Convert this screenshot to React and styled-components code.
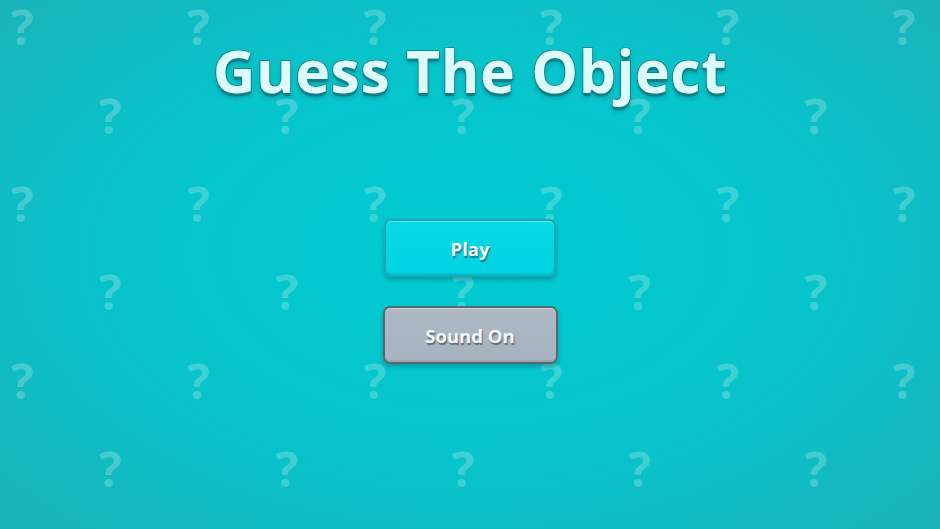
import React from "react";
import styled, { createGlobalStyle } from "styled-components";

const GlobalStyle = createGlobalStyle`
  html, body {
    margin: 0;
    padding: 0;
    width: 100%;
    height: 100%;
    overflow: hidden;
  }
  body {
    font-family: "Open Sans", "Noto Sans", sans-serif;
  }
`;

const COLS = 11;
const ROWS = 7;

export default function App() {
  const cells = [];
  for (let r = 0; r < ROWS; r++) {
    for (let c = 0; c < COLS; c++) {
      cells.push(<Mark key={r + "-" + c}>{(r + c) % 2 === 0 ? "?" : ""}</Mark>);
    }
  }

  return (
    <>
      <GlobalStyle />
      <Screen>
        <Pattern>{cells}</Pattern>
        <Content>
          <Title>Guess The Object</Title>
          <Menu>
            <MenuButton variant="play">Play</MenuButton>
            <MenuButton variant="sound">Sound On</MenuButton>
          </Menu>
        </Content>
      </Screen>
    </>
  );
}

const Screen = styled.div`
  position: relative;
  width: 940px;
  height: 529px;
  overflow: hidden;
  background: radial-gradient(
    ellipse 70% 75% at 50% 48%,
    #00cbd2 0%,
    #08c3ca 55%,
    #1ab2b8 100%
  );
`;

const Pattern = styled.div`
  position: absolute;
  left: -22px;
  top: -17px;
  display: grid;
  grid-template-columns: repeat(${COLS}, 88.2px);
  grid-auto-rows: 88.4px;
  pointer-events: none;
`;

const Mark = styled.span`
  display: flex;
  align-items: center;
  justify-content: center;
  font-family: "Open Sans", sans-serif;
  font-weight: 700;
  font-size: 48px;
  line-height: 1;
  color: rgba(255, 255, 255, 0.22);
`;

const Content = styled.div`
  position: relative;
  display: flex;
  flex-direction: column;
  align-items: center;
  padding-top: 31px;
`;

const Title = styled.h1`
  margin: 0;
  font-family: "Open Sans", sans-serif;
  font-weight: 700;
  font-size: 59px;
  line-height: 78px;
  letter-spacing: 0.5px;
  color: #dcfcfc;
  -webkit-text-stroke: 1.6px #167e86;
  paint-order: stroke fill;
  text-shadow: 0 3px 0 #127f87, 0 4px 4px rgba(0, 70, 80, 0.35);
`;

const Menu = styled.div`
  display: flex;
  flex-direction: column;
  align-items: center;
  gap: 29px;
  margin-top: 110px;
`;

const MenuButton = styled.button`
  width: ${(p) => (p.variant === "play" ? "172px" : "175px")};
  height: 58px;
  border-radius: 7px;
  border: 2px solid ${(p) => (p.variant === "play" ? "#18a9b3" : "#55696f")};
  background: ${(p) =>
    p.variant === "play"
      ? "linear-gradient(180deg, #0ad8e6 0%, #00d3e2 100%)"
      : "linear-gradient(180deg, #aeb9c5 0%, #a7b2bf 100%)"};
  box-shadow: inset 0 1px 0 rgba(255, 255, 255, 0.35),
    inset 0 -2px 0 rgba(0, 0, 0, 0.08), 0 3px 4px rgba(0, 60, 70, 0.3);
  font-family: "Open Sans", sans-serif;
  font-weight: 700;
  font-size: 18.5px;
  color: #f4f7f8;
  text-shadow: 1px 2px 1px rgba(40, 50, 60, 0.55);
  cursor: pointer;
  padding: 0;
`;
